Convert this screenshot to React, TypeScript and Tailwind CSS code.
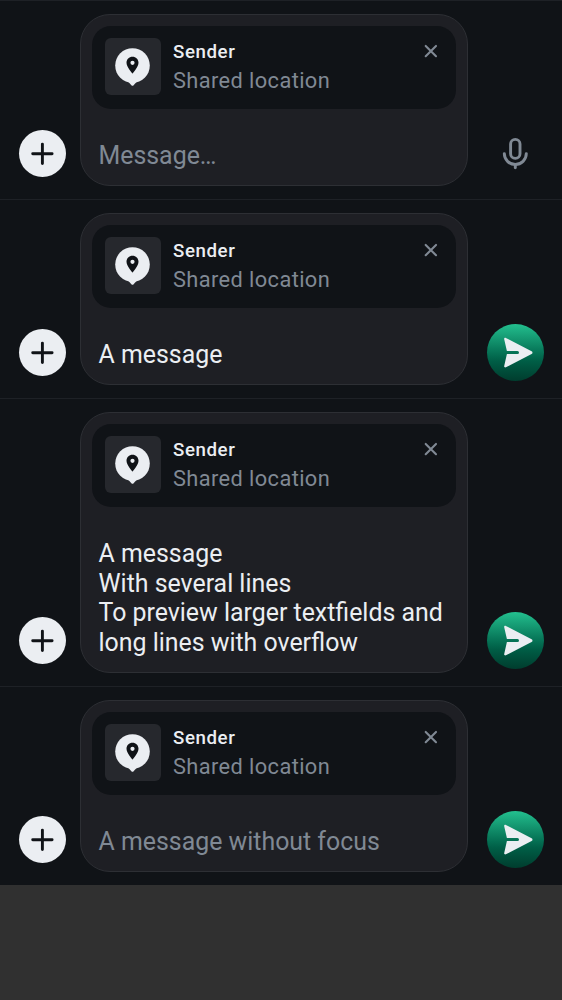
import React from "react";

function PlusButton() {
  return (
    <button aria-label="Add attachment" className="mb-[22.3px] ml-[18.5px] size-[47px] shrink-0 rounded-full bg-[#ebeef2]">
      <svg viewBox="0 0 47 47" className="block size-full" fill="none" stroke="#101317" strokeWidth="2.9" strokeLinecap="round">
        <path d="M23.4 14.1v19.4M13.7 23.8h19.4" />
      </svg>
    </button>
  );
}

function LocationThumb() {
  return (
    <div className="mt-[12.3px] h-[56.5px] w-[56px] shrink-0 rounded-[6px] bg-[#26282d]">
      <svg viewBox="0 0 56 56" className="block size-full">
        <circle cx="27.5" cy="27.3" r="17.3" fill="#ebeef2" />
        <path d="M22.8 42.9l3.6 4q1.1 1.2 2.2 0l3.6-4z" fill="#ebeef2" />
        <path fillRule="evenodd" fill="#101317" d="M27.5 18.6c-3.4 0-6 2.6-6 6 0 4.3 6 10.9 6 10.9s6-6.6 6-10.9c0-3.4-2.6-6-6-6zm0 3.9a2.1 2.1 0 1 1 0 4.2 2.1 2.1 0 0 1 0-4.2z" />
      </svg>
    </div>
  );
}

function Reply() {
  return (
    <div className="flex h-[83px] rounded-[19px] bg-[#101317] pl-[12.5px]">
      <LocationThumb />
      <div className="ml-[12.5px] grow whitespace-nowrap">
        <div className="mt-3 text-[18.7px] leading-[28px] font-medium tracking-[0.58px] text-[#ebeef2]">Sender</div>
        <div className="text-[21.8px] leading-[29px] tracking-[0.4px] text-[#808994]">Shared location</div>
      </div>
      <button aria-label="Close" className="mt-[17px] mr-[17px] size-4 shrink-0">
        <svg viewBox="0 0 16 16" className="block size-4" fill="none" stroke="#808994" strokeWidth="2.1" strokeLinecap="round">
          <path d="M2.7 2.9l10.3 10.3M13 2.9L2.7 13.2" />
        </svg>
      </button>
    </div>
  );
}

function SendButton() {
  return (
    <button aria-label="Send" className="mb-[17.4px] ml-[18.8px] size-[57px] shrink-0 rounded-full bg-linear-to-b from-[#23c08f] from-0% via-[#005e46] via-65% to-[#003d2e] to-100%">
      <svg viewBox="0 0 57 57" className="block size-full">
        <path d="M17.2 15.2c-.3-1 .7-1.8 1.7-1.3L44.6 27.3c1.2.6 1.2 2.1 0 2.7L18.9 43.3c-1 .5-2-.3-1.7-1.3l2.7-11.9h10.6a1.5 1.5 0 0 0 0-3H19.9z" fill="#ebeef2" />
      </svg>
    </button>
  );
}

function MicButton() {
  return (
    <button aria-label="Record voice message" className="mb-[17px] ml-[19px] size-[57px] shrink-0">
      <svg viewBox="0 0 57 57" className="block size-full" fill="none" stroke="#808994" strokeWidth="2.9" strokeLinecap="round">
        <rect x="23.6" y="14.4" width="9.4" height="19" rx="4.7" />
        <path d="M17.3 28.6c0 6.2 5 10.9 11 10.9s11-4.7 11-10.9" />
        <path d="M28.3 39.5v3.3" />
      </svg>
    </button>
  );
}

type ComposerProps = { lines: string[]; muted?: boolean; voice?: boolean };

function Composer({ lines, muted, voice }: ComposerProps) {
  return (
    <section className={`flex items-end border-t border-[#1e2126] pt-[13px] ${lines.length > 1 ? "h-[288px]" : "h-[199px]"}`}>
      <PlusButton />
      <div className="mb-[13px] ml-[14.5px] w-[388px] shrink-0 rounded-[30px] border border-[#2d2f34] bg-[#1e1f24] px-[11px] pt-[11px] pb-[14.33px]">
        <Reply />
        <div className={`mt-8 ml-[6.5px] text-[24.9px] leading-[29.67px] whitespace-nowrap ${muted ? "text-[#808994]" : "text-[#ebeef2]"}`}>
          {lines.map((line) => (
            <div key={line}>{line}</div>
          ))}
        </div>
      </div>
      {voice ? <MicButton /> : <SendButton />}
    </section>
  );
}

export default function App() {
  return (
    <div className="h-[1000px] w-[562px] overflow-hidden bg-[#303030] font-[Roboto,sans-serif]">
      <main className="bg-[#101317]">
        <Composer lines={["Message…"]} muted voice />
        <Composer lines={["A message"]} />
        <Composer lines={["A message", "With several lines", "To preview larger textfields and", "long lines with overflow"]} />
        <Composer lines={["A message without focus"]} muted />
      </main>
    </div>
  );
}
